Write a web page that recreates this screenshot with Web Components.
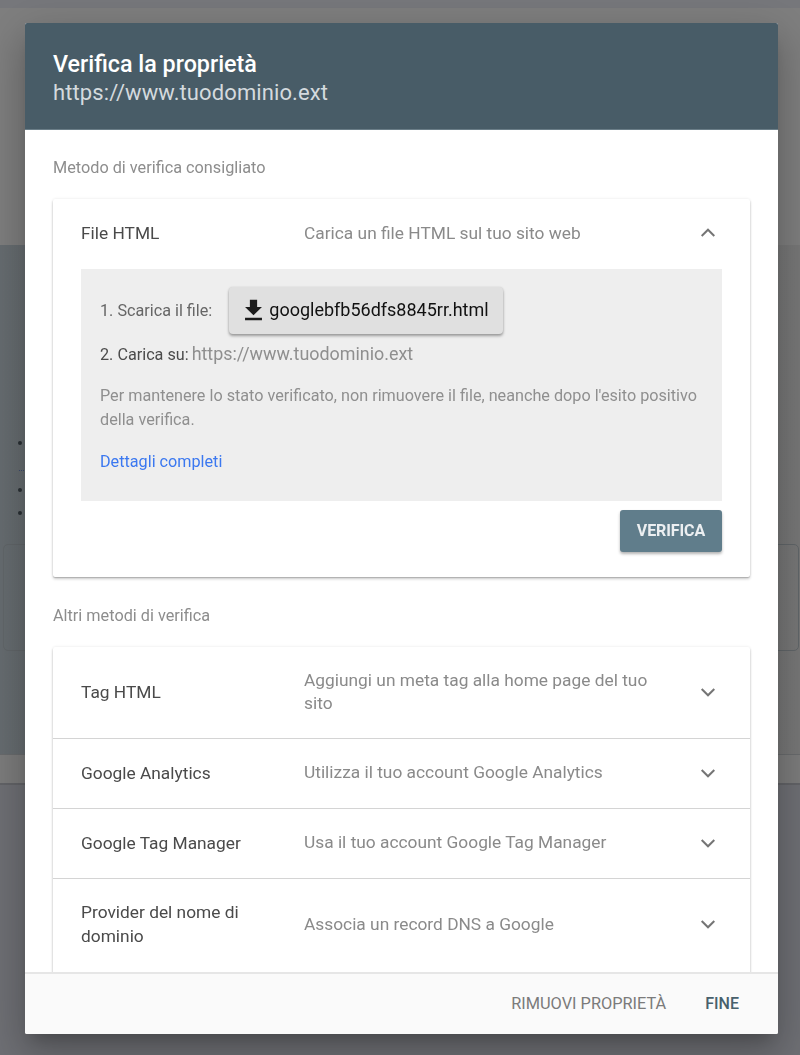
<!DOCTYPE html>
<html lang="it"><head><meta charset="utf-8"><style>
html,body{margin:0;padding:0;height:1055px;overflow:hidden;font-family:Roboto,"Liberation Sans",sans-serif}
</style></head><body>
<page-backdrop></page-backdrop>
<verify-dialog>
  <div slot="title">Verifica la proprietà</div>
  <div slot="sub">https://www.tuodominio.ext</div>
  <section-label>Metodo di verifica consigliato</section-label>
  <method-card>
    <method-row name="File HTML" desc="Carica un file HTML sul tuo sito web" open h="70"></method-row>
    <file-panel></file-panel>
    <verify-action>VERIFICA</verify-action>
  </method-card>
  <section-label style="margin-top:29px">Altri metodi di verifica</section-label>
  <method-card>
    <method-row name="Tag HTML" desc="Aggiungi un meta tag alla home page del tuo sito" h="91"></method-row>
    <method-row name="Google Analytics" desc="Utilizza il tuo account Google Analytics" h="70" line></method-row>
    <method-row name="Google Tag Manager" desc="Usa il tuo account Google Tag Manager" h="70" line></method-row>
    <method-row name="Provider del nome di dominio" desc="Associa un record DNS a Google" h="93" line></method-row>
    <method-row name="" desc="" h="40" blank></method-row>
  </method-card>
</verify-dialog>
<script>
const def=(n,html)=>{customElements.define(n,class extends HTMLElement{
  constructor(){super();this.attachShadow({mode:'open'}).innerHTML=typeof html==='function'?html(this):html;}
})};
def('page-backdrop',`<style>
:host{display:flex;flex-direction:column;height:1055px;background:#6f7075}
.a{height:8px;background:#77787c}.b{height:237px;background:#7f7f7f}
.c{height:510px;background:linear-gradient(90deg,#676d71,#787878);box-sizing:border-box;border-bottom:1px solid #6a6c6e;padding:196px 0 0 18px}
.d{height:30px;box-sizing:border-box;background:#7d7d7d;border-bottom:2px solid #636468}
.dot{width:4px;height:4px;border-radius:50%;background:#2a3035}
.dash{width:7px;border-top:1px dotted #3d4c70;margin:25px 0 17px 1px}
.dot.two{margin-bottom:19px}
.box{box-sizing:border-box;margin:29px 0 0 -15px;width:796px;height:107px;border:1px solid #62676a;border-radius:5px}
</style><div class="a"></div><div class="b"></div><div class="c"><div class="dot"></div><div class="dash"></div><div class="dot two"></div><div class="dot"></div><div class="box"></div></div><div class="d"></div>`);
def('verify-dialog',`<style>
:host{position:absolute;left:25px;top:23px;width:753px;height:1011px;display:flex;flex-direction:column;background:#fff;border-radius:2px;overflow:hidden;filter:blur(.5px);box-shadow:0 11px 15px -7px rgba(0,0,0,.2),0 24px 38px 3px rgba(0,0,0,.14),0 9px 46px 8px rgba(0,0,0,.12)}
header{height:107px;box-sizing:border-box;flex:none;background:#485c67;padding:28px 28px 0;border-bottom:1px solid #6b7e88}
.t{font:500 23.3px/26px Roboto,sans-serif;color:#fff}
.s{font:400 22px/32px Roboto,sans-serif;color:#d4dade;letter-spacing:.1px}
main{flex:1;min-height:0;overflow:hidden;padding:28px 28px 0}
footer{flex:none;height:62px;box-sizing:border-box;background:#fafafa;border-top:2px solid #e6e6e6;display:flex;justify-content:flex-end;align-items:center;gap:39px;padding:0 39px 0 0;font:400 16.35px/20px Roboto,sans-serif}
.r{color:#7b7b7b}.f{color:#48606c;font-weight:500;font-size:16px}
</style><header><div class="t"><slot name="title"></slot></div><div class="s"><slot name="sub"></slot></div></header><main><slot></slot></main><footer><span class="r">RIMUOVI PROPRIETÀ</span><span class="f">FINE</span></footer>`);
def('section-label',`<style>:host{display:block;font:400 16.25px/20px Roboto,sans-serif;color:#8d8d8d;height:20px;margin-bottom:21px}</style><slot></slot>`);
def('method-card',`<style>:host{display:block;background:#fff;border-radius:2px;box-shadow:0 1px 1px rgba(0,0,0,.14),0 2px 3px rgba(0,0,0,.2),0 0 3px rgba(0,0,0,.1)}</style><slot></slot>`);
const up='M6.6 14.6 12 9.2l5.4 5.4',down='M6.6 9.4 12 14.8l5.4-5.4';
def('method-row',h=>{const open=h.hasAttribute('open');const H=h.getAttribute('h')||'68';return `<style>
:host{display:flex;box-sizing:border-box;height:${H}px;align-items:center;padding:0 28px 2px;${h.hasAttribute('line')?'border-top:1px solid #d4d4d4;':''}}
.n{width:223px;flex:none;font:400 17.33px/24px Roboto,sans-serif;color:#4a4a4a;padding-right:20px;box-sizing:border-box}
.d{flex:1;font:400 17.33px/23px Roboto,sans-serif;color:#8a8a8a;padding-right:34px}
svg{width:28px;height:28px;fill:none;stroke:#757575;stroke-width:1.7;flex:none}
</style><div class="n">${h.getAttribute('name')}</div><div class="d">${h.getAttribute('desc')}</div>${h.hasAttribute('blank')?'':`<svg viewBox="0 0 24 24"><path d="${open?up:down}"/></svg>`}`});
def('file-panel',`<style>
:host{display:block;margin:0 28px;height:232px;box-sizing:border-box;background:#eee;padding:18px 19px 0;font:400 16.2px/24px Roboto,sans-serif;color:#666}
.l1{display:flex;align-items:center;gap:17px;height:48px}
.btn{display:inline-flex;align-items:center;gap:1px;height:47px;width:274px;margin-bottom:2px;box-sizing:border-box;padding:0 0 0 10px;background:#e0e0e0;border-radius:4px;color:#111;font:400 18px/24px Roboto,sans-serif;box-shadow:0 2px 3px rgba(0,0,0,.35),0 0 2px rgba(0,0,0,.1)}
.btn svg{width:29px;height:29px;fill:#1c1c1c;flex:none}
.l2{margin-top:7px;height:24px;display:flex;gap:3px;align-items:baseline}.l2 b{font-weight:400;font-size:16.2px;color:#4b4b4b}.u{color:#8f8f8f;font-size:17.9px}
.p{margin:18px 0 0;font:400 16.2px/24px Roboto,sans-serif;color:#8f8f8f}
a{display:block;margin-top:18px;color:#3b78f0;font:400 16.2px/24px Roboto,sans-serif;text-decoration:none}
</style><div class="l1"><span>1. Scarica il file:</span><span class="btn"><svg viewBox="0 0 24 24"><path d="M19 9h-4V3H9v6H5l7 7 7-7zM5 18v2h14v-2H5z"/></svg>googlebfb56dfs8845rr.html</span></div>
<div class="l2"><b>2. Carica su:</b><span class="u">https://www.tuodominio.ext</span></div>
<p class="p">Per mantenere lo stato verificato, non rimuovere il file, neanche dopo l'esito positivo della verifica.</p><a href="#">Dettagli completi</a>`);
def('verify-action',`<style>
:host{display:flex;justify-content:flex-end;padding:9px 28px 25px}
span{display:flex;align-items:center;justify-content:center;width:102px;height:42px;border-radius:3px;background:#607d8b;color:#eceff1;font:700 16px/20px Roboto,sans-serif;letter-spacing:-.1px;box-shadow:0 2px 3px rgba(0,0,0,.3)}
</style><span><slot></slot></span>`);
</script></body></html>
